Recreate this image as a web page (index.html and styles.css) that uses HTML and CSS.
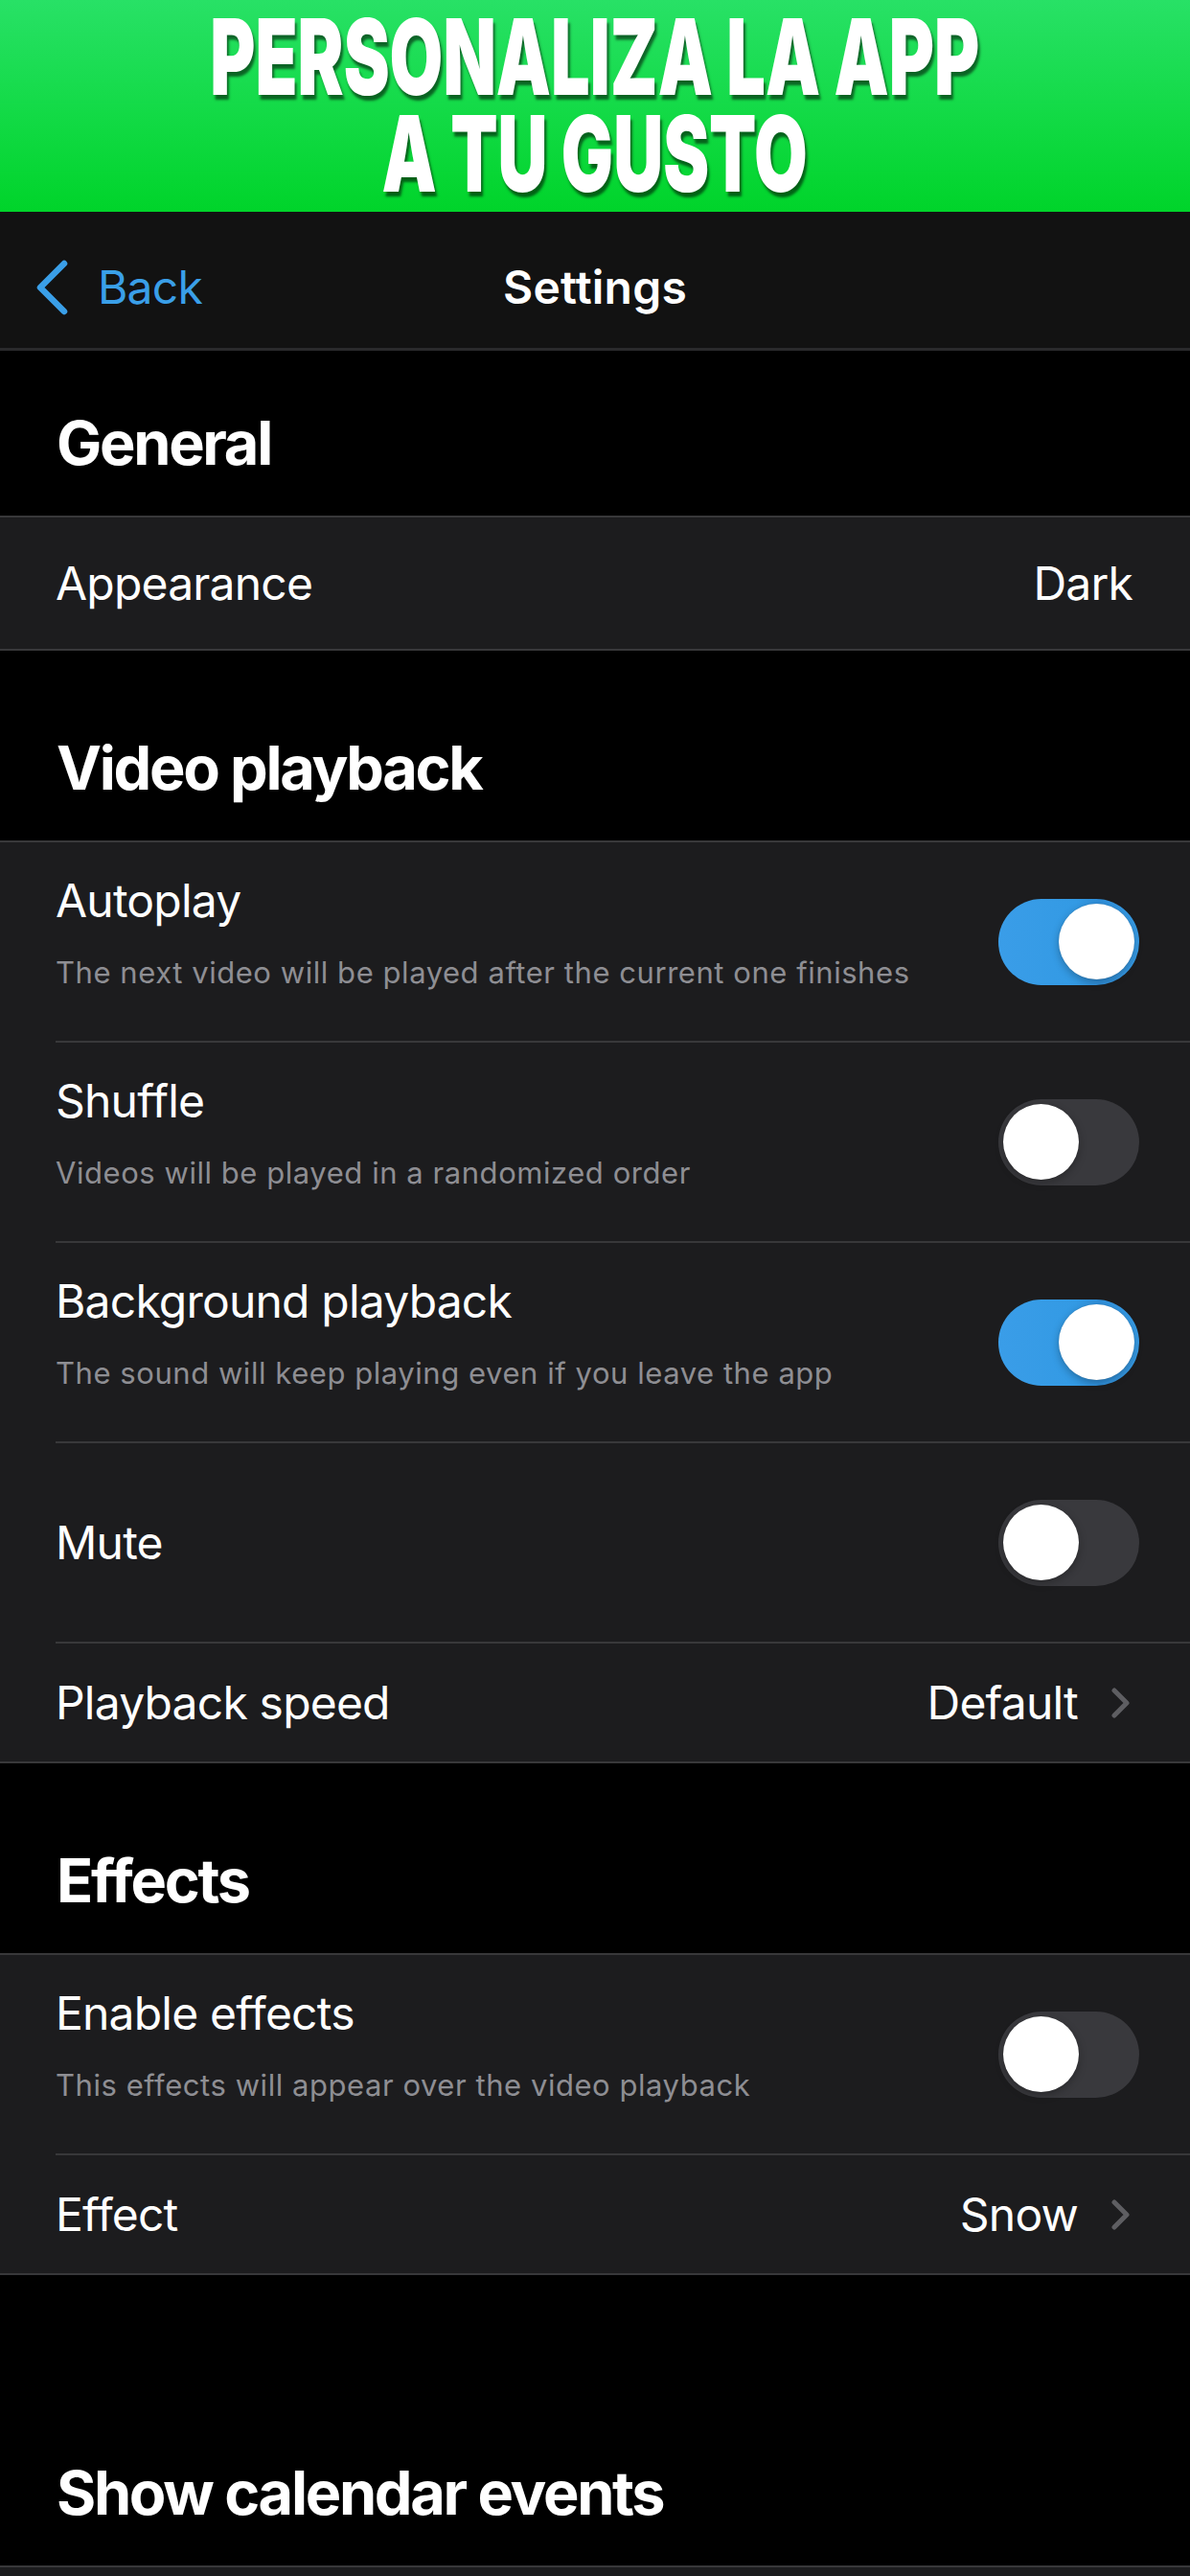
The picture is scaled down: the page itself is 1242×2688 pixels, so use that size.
FILE: index.html
```html
<!DOCTYPE html>
<html lang="es">
<head>
<meta charset="utf-8">
<title>Settings</title>
<link rel="stylesheet" href="styles.css">
</head>
<body>
<header class="banner">
  <h1 class="banner-text">PERSONALIZA LA APP<br>A TU GUSTO</h1>
</header>

<nav class="navbar">
  <div class="nav-back">
    <svg class="back-chevron" width="36" height="58" viewBox="0 0 36 58"><path d="M31 4 L6 29 L31 54" fill="none" stroke="#3a9fe8" stroke-width="6.5" stroke-linecap="round" stroke-linejoin="round"/></svg>
    <span class="back-text">Back</span>
  </div>
  <div class="nav-title">Settings</div>
  <div class="nav-spacer"></div>
</nav>

<main class="settings">
  <h2 class="section-header first">General</h2>
  <section class="group">
    <div class="row row-value tall">
      <span class="row-title">Appearance</span>
      <span class="row-detail">Dark</span>
    </div>
  </section>

  <h2 class="section-header">Video playback</h2>
  <section class="group">
    <div class="row row-toggle">
      <div class="row-text">
        <span class="row-title">Autoplay</span>
        <span class="row-sub">The next video will be played after the current one finishes</span>
      </div>
      <span class="toggle on"><span class="knob"></span></span>
    </div>
    <div class="row row-toggle">
      <div class="row-text">
        <span class="row-title">Shuffle</span>
        <span class="row-sub">Videos will be played in a randomized order</span>
      </div>
      <span class="toggle"><span class="knob"></span></span>
    </div>
    <div class="row row-toggle">
      <div class="row-text">
        <span class="row-title">Background playback</span>
        <span class="row-sub">The sound will keep playing even if you leave the app</span>
      </div>
      <span class="toggle on"><span class="knob"></span></span>
    </div>
    <div class="row row-toggle single">
      <div class="row-text">
        <span class="row-title">Mute</span>
      </div>
      <span class="toggle"><span class="knob"></span></span>
    </div>
    <div class="row row-value link">
      <span class="row-title">Playback speed</span>
      <span class="row-detail">Default<svg class="chev" width="22" height="32" viewBox="0 0 22 32"><path d="M4 3 L17 16 L4 29" fill="none" stroke="#5e5e62" stroke-width="5" stroke-linecap="round" stroke-linejoin="round"/></svg></span>
    </div>
  </section>

  <h2 class="section-header">Effects</h2>
  <section class="group">
    <div class="row row-toggle">
      <div class="row-text">
        <span class="row-title">Enable effects</span>
        <span class="row-sub">This effects will appear over the video playback</span>
      </div>
      <span class="toggle"><span class="knob"></span></span>
    </div>
    <div class="row row-value link">
      <span class="row-title">Effect</span>
      <span class="row-detail">Snow<svg class="chev" width="22" height="32" viewBox="0 0 22 32"><path d="M4 3 L17 16 L4 29" fill="none" stroke="#5e5e62" stroke-width="5" stroke-linecap="round" stroke-linejoin="round"/></svg></span>
    </div>
  </section>

  <h2 class="section-header spaced">Show calendar events</h2>
  <section class="group open"></section>
</main>
</body>
</html>
```

FILE: styles.css
```css
* { box-sizing: border-box; }

html, body {
  margin: 0;
  padding: 0;
  background: #000;
}

body {
  width: 1242px;
  height: 2688px;
  overflow: hidden;
  font-family: "Inter", "Roboto", "Liberation Sans", sans-serif;
  color: #fff;
}

/* Banner */
.banner {
  height: 221px;
  padding-top: 9px;
  background: linear-gradient(to bottom, #28e166 0%, #00d42a 100%);
  text-align: center;
}

.banner-text {
  display: inline-block;
  margin: 0;
  font-family: "Inter", "Roboto", sans-serif;
  font-weight: 900;
  font-size: 100px;
  line-height: 92px;
  white-space: nowrap;
  color: #fff;
  transform: scale(0.72, 1.1);
  transform-origin: 50% 0;
  text-shadow: 3px 4px 3px rgba(0, 0, 0, 0.55);
}

/* Nav */
.navbar {
  height: 145px;
  padding-top: 16px;
  background: #121212;
  border-bottom: 3px solid #2a2a2c;
  display: grid;
  grid-template-columns: 1fr auto 1fr;
  align-items: center;
}

.nav-back {
  display: flex;
  align-items: center;
  padding-left: 36px;
  gap: 30px;
  color: #3a9fe8;
}

.back-chevron { display: block; }

.back-text {
  font-size: 48px;
  line-height: 58px;
  letter-spacing: -0.8px;
  color: #3a9fe8;
}

.nav-title {
  font-size: 48px;
  font-weight: 600;
  line-height: 58px;
  letter-spacing: 0.2px;
}

/* Sections */
.section-header {
  margin: 0;
  padding: 84px 0 38px 59px;
  font-size: 63px;
  font-weight: 700;
  line-height: 76px;
  letter-spacing: -2.3px;
}

.section-header.first { padding-top: 58px; }
.section-header.spaced { padding-top: 189px; }

.group {
  background: #1c1c1e;
  border-top: 2px solid #38383a;
  border-bottom: 2px solid #38383a;
}

.group.open {
  border-bottom: 0;
  height: 20px;
}

.row {
  margin-left: 58px;
  display: flex;
  align-items: center;
  justify-content: space-between;
}

.row + .row { border-top: 2px solid #38383a; }

.row-title {
  font-size: 48px;
  line-height: 58px;
  letter-spacing: -0.8px;
  color: #fff;
}

.row-value { height: 125px; padding-right: 60px; }
.row-value.tall { height: 137px; }
.row-value.link { padding-right: 61px; }

.row-detail {
  display: flex;
  align-items: center;
  gap: 34px;
  font-size: 48px;
  line-height: 58px;
  letter-spacing: -0.8px;
  color: #fff;
}

.chev { display: block; }

.row-toggle {
  height: 209px;
  padding-right: 53px;
}

.row:first-child.row-toggle { height: 207px; }

.row-text {
  display: flex;
  flex-direction: column;
  gap: 26px;
  margin-top: -20px;
}

.row-toggle.single .row-text { margin-top: 0; }

.row-sub {
  font-size: 31px;
  line-height: 40px;
  letter-spacing: 0.55px;
  color: #8e8e93;
}

/* Toggle */
.toggle {
  position: relative;
  flex: none;
  width: 147px;
  height: 90px;
  border-radius: 45px;
  background: #39393d;
}

.toggle.on {
  background: linear-gradient(to right, #3a9de8 0%, #339ae4 55%, #2f8fda 72%, #379ce6 100%);
}

.knob {
  position: absolute;
  top: 5.5px;
  left: 5px;
  width: 79px;
  height: 79px;
  border-radius: 50%;
  background: #fff;
  box-shadow: 0 3px 8px rgba(0, 0, 0, 0.28), 0 0 1px rgba(0, 0, 0, 0.2);
}

.toggle.on .knob {
  left: auto;
  right: 5px;
}
```
